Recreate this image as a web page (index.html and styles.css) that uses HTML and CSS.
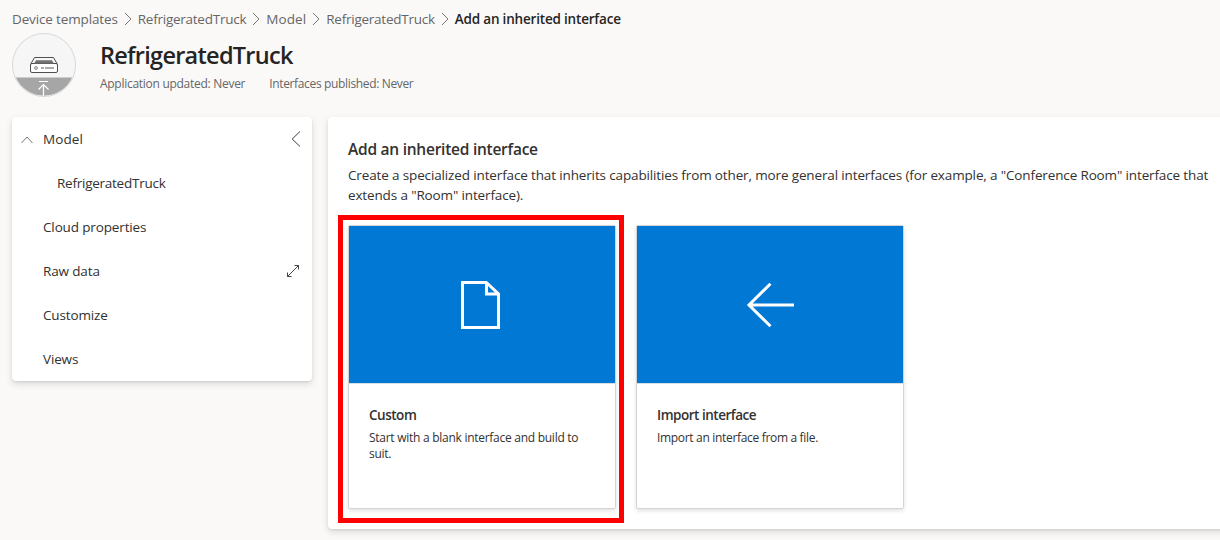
FILE: index.html
```html
<!DOCTYPE html>
<html lang="en">
<head>
<meta charset="utf-8">
<title>Add an inherited interface</title>
<link rel="stylesheet" href="styles.css">
</head>
<body>
<nav class="breadcrumb">
  <a class="crumb">Device templates</a>
  <svg class="sep" viewBox="0 0 8 14"><path d="M1 1l6 6-6 6"/></svg>
  <a class="crumb device-name">RefrigeratedTruck</a>
  <svg class="sep" viewBox="0 0 8 14"><path d="M1 1l6 6-6 6"/></svg>
  <a class="crumb model-name">Model</a>
  <svg class="sep" viewBox="0 0 8 14"><path d="M1 1l6 6-6 6"/></svg>
  <a class="crumb device-name">RefrigeratedTruck</a>
  <svg class="sep" viewBox="0 0 8 14"><path d="M1 1l6 6-6 6"/></svg>
  <span class="crumb-current">Add an inherited interface</span>
</nav>

<header class="template-header">
  <svg class="avatar" viewBox="0 0 64 64">
    <circle cx="32" cy="32" r="31.5" fill="#f6f6f6"/>
    <path d="M3.8 44.5h56.4A31 31 0 0 1 3.8 44.5z" fill="#a6a6a6"/>
    <circle cx="32" cy="32" r="31.5" fill="none" stroke="#d8d8d8"/>
    <g fill="none" stroke="#505050">
      <path d="M18.5 31.5l4-7h19l4 7"/>
      <rect x="18.5" y="30.5" width="27" height="9" rx="1.5" fill="#fff"/>
      <path d="M24.2 27.2h15.6l2.2 3.4H22z" fill="#707070" stroke="none"/>
      <circle cx="24" cy="35" r="1.4" stroke="#808080"/>
      <path d="M29 35h3M33 35h9" stroke="#909090" stroke-width="1.6"/>
    </g>
    <path d="M27 48.5h9M31.500 63V51.500M26.500 56.500l5-5 5 5" fill="none" stroke="#fff" stroke-width="1.2"/>
  </svg>
  <div class="template-info">
    <h1 class="template-title">RefrigeratedTruck</h1>
    <div class="template-meta"><span class="meta-updated">Application updated: Never</span><span class="meta-published">Interfaces published: Never</span></div>
  </div>
</header>

<div class="content">
  <aside class="sidebar">
    <div class="nav-row">
      <svg class="chevron-up" viewBox="0 0 12 8"><path d="M.5 7L6 1l5.500 6"/></svg>
      <span class="model-name">Model</span>
      <svg class="collapse" viewBox="0 0 10 16"><path d="M9 .5L1.200 8 9 15.500"/></svg>
    </div>
    <div class="nav-row nav-child"><span class="device-name">RefrigeratedTruck</span></div>
    <div class="nav-row"><span>Cloud properties</span></div>
    <div class="nav-row">
      <span>Raw data</span>
      <svg class="expand" viewBox="0 0 14 14"><path d="M1.500 12.500l11-11M8.500 1.500h4v4M1.500 8.500v4h4"/></svg>
    </div>
    <div class="nav-row"><span>Customize</span></div>
    <div class="nav-row"><span>Views</span></div>
  </aside>

  <main class="panel">
    <h2 class="panel-title">Add an inherited interface</h2>
    <p class="panel-text">Create a specialized interface that inherits capabilities from other, more general interfaces (for example, a "Conference Room" interface that<br>extends a "Room" interface).</p>
    <div class="cards">
      <section class="card">
        <div class="card-hero">
          <svg class="hero-icon" viewBox="0 0 48 48"><path d="M4.500 1.500h23.800L40.500 13v33.500h-36zM28.500 1.500v11.500h12"/></svg>
        </div>
        <div class="card-body">
          <h3 class="card-title">Custom</h3>
          <p class="card-text">Start with a blank interface and build to<br>suit.</p>
        </div>
        <div class="highlight"></div>
      </section>
      <section class="card">
        <div class="card-hero">
          <svg class="hero-icon" viewBox="0 0 48 48"><path d="M48 24H3M24.500 2.800L3 24l21.500 21.200"/></svg>
        </div>
        <div class="card-body">
          <h3 class="card-title">Import interface</h3>
          <p class="card-text card-text-import">Import an interface from a file.</p>
        </div>
      </section>
    </div>
  </main>
</div>
</body>
</html>
```
FILE: styles.css
```css
* { box-sizing: border-box; }
body {
  margin: 0;
  height: 540px;
  overflow: hidden;
  background: #faf9f8;
  color: #323130;
  font: 13.5px/20px "Open Sans", "Noto Sans", sans-serif;
  letter-spacing: -.139px;
  white-space: nowrap;
}
h1, h2, h3, p { margin: 0; }
svg { display: block; flex: none; fill: none; }
.device-name { letter-spacing: -.25px; }
.model-name { letter-spacing: .1px; }

.breadcrumb {
  display: flex;
  align-items: center;
  height: 33px;
  padding: 5px 0 0 12px;
  color: #666;
}
.sep { width: 8px; height: 14px; margin: 0 6px; stroke: #777; }
.crumb-current { color: #252423; font-weight: 600; letter-spacing: -.19px; }

.template-header { display: flex; height: 84px; padding-left: 12px; }
.avatar { width: 64px; height: 64px; }
.template-info { margin-left: 24px; padding-top: 6px; }
.template-title { font-size: 23.5px; line-height: 32px; font-weight: 600; letter-spacing: -.73px; color: #252423; }
.template-meta { display: flex; gap: 24px; padding-top: 5px; font-size: 12px; line-height: 16px; color: #666; }
.meta-updated { letter-spacing: -.28px; }
.meta-published { letter-spacing: -.35px; }

.content { display: flex; align-items: flex-start; gap: 16px; padding-left: 12px; }
.sidebar, .panel {
  background: #fff;
  border-radius: 4px;
  box-shadow: 0 3px 7px rgba(0, 0, 0, .13), 0 1px 2px rgba(0, 0, 0, .08);
}
.sidebar { width: 300px; flex: none; }
.nav-row { display: flex; align-items: center; height: 44px; padding: 0 12px 0 31px; }
.nav-child { padding-left: 45px; }
.chevron-up { width: 12px; height: 8px; margin: 1px 10px 0 -22px; stroke: #777; }
.collapse { width: 10px; height: 16px; margin: 0 -1px 0 auto; stroke: #423846; }
.expand { width: 14px; height: 14px; margin-left: auto; stroke: #444; }

.panel { width: 904px; flex: none; height: 412px; padding: 22px 20px; border-radius: 4px 0 0 4px; }
.panel-title { font-size: 15.5px; line-height: 21px; font-weight: 600; letter-spacing: -.25px; }
.panel-text { padding-top: 5px; }
.cards { display: flex; gap: 20px; margin-top: 20px; }
.card {
  position: relative;
  width: 268px;
  height: 284px;
  border: 1px solid #d4d4d4;
  border-radius: 2px;
  box-shadow: 0 2px 4px rgba(0, 0, 0, .12);
}
.card-hero { display: flex; align-items: center; justify-content: center; height: 157px; background: #0078d4; }
.hero-icon { width: 48px; height: 48px; stroke: #fff; stroke-width: 3; }
.card-body { padding: 21px 20px; border-top: 1px solid #ddd; }
.card-title { font-size: 13.5px; line-height: 20px; font-weight: 600; letter-spacing: -.48px; }
.card-text { padding-top: 5px; font-size: 12px; line-height: 16px; letter-spacing: -.27px; }
.card-text-import { letter-spacing: -.32px; }
.highlight { position: absolute; inset: -11px -9px -15px -11px; border: 5px solid #f00; }
```
